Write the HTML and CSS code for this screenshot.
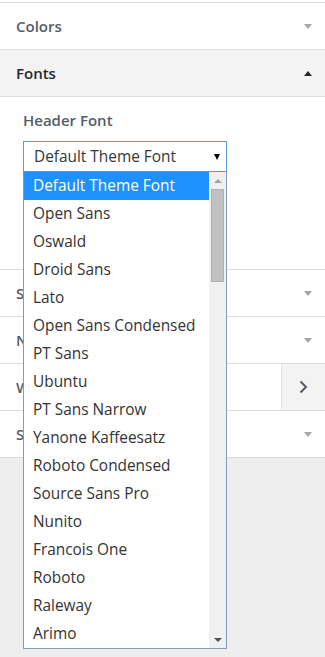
FILE: index.html
```html
<!DOCTYPE html>
<html>
<head>
<meta charset="utf-8">
<link rel="stylesheet" href="styles.css">
</head>
<body>
<div class="pane">
  <div class="top-gap"></div>
  <div class="section">
    <h3 class="title"><span>Colors</span><span class="caret down"></span></h3>
  </div>
  <div class="section open">
    <h3 class="title"><span>Fonts</span><span class="caret up"></span></h3>
    <div class="content">
      <div class="ctl-title">Header Font</div>
      <div class="select-wrap">
        <div class="select"><span>Default Theme Font</span><span class="sel-arrow"></span></div>
        <div class="dropdown">
          <ul class="options">
            <li class="opt active">Default Theme Font</li>
            <li class="opt">Open Sans</li>
            <li class="opt">Oswald</li>
            <li class="opt">Droid Sans</li>
            <li class="opt">Lato</li>
            <li class="opt">Open Sans Condensed</li>
            <li class="opt">PT Sans</li>
            <li class="opt">Ubuntu</li>
            <li class="opt">PT Sans Narrow</li>
            <li class="opt">Yanone Kaffeesatz</li>
            <li class="opt">Roboto Condensed</li>
            <li class="opt">Source Sans Pro</li>
            <li class="opt">Nunito</li>
            <li class="opt">Francois One</li>
            <li class="opt">Roboto</li>
            <li class="opt">Raleway</li>
            <li class="opt">Arimo</li>
          </ul>
          <div class="scrollbar">
            <div class="sb-btn"><span class="sb-up"></span></div>
            <div class="sb-track"><div class="sb-thumb"></div></div>
            <div class="sb-btn"><span class="sb-down"></span></div>
          </div>
        </div>
      </div>
    </div>
  </div>
  <div class="section">
    <h3 class="title"><span>Social Links</span><span class="caret down"></span></h3>
  </div>
  <div class="section">
    <h3 class="title"><span>Navigation</span><span class="caret down"></span></h3>
  </div>
  <div class="section panel">
    <h3 class="title"><span>Widgets</span>
      <span class="chev-box"><svg width="9" height="14" viewBox="0 0 9 14"><polyline points="1.5,1.5 7,7 1.5,12.5" fill="none" stroke="#555d66" stroke-width="2"/></svg></span>
    </h3>
  </div>
  <div class="section last">
    <h3 class="title"><span>Static Front Page</span><span class="caret down"></span></h3>
  </div>
</div>
</body>
</html>
```

FILE: styles.css
```css
html, body {
  margin: 0;
  padding: 0;
  background: #eeeeee;
  font-family: "Open Sans", "Noto Sans", sans-serif;
}

body {
  min-height: 657px;
}

.pane {
  width: 325px;
  min-height: 657px;
}

.top-gap {
  height: 2px;
  background: #fff;
}

.section {
  border-top: 1px solid #dddddd;
  background: #fff;
}

.section.last {
  border-bottom: 1px solid #dddddd;
}

.title {
  margin: 0;
  height: 46px;
  padding: 0 13px 0 16px;
  display: flex;
  align-items: center;
  justify-content: space-between;
  font-size: 15px;
  font-weight: 600;
  color: #555d66;
}

.open .title {
  background: #f3f3f3;
  color: #23282d;
  border-bottom: 1px solid #dddddd;
}

.caret {
  width: 0;
  height: 0;
  border-left: 4px solid transparent;
  border-right: 4px solid transparent;
}

.caret.down {
  border-top: 5px solid #a0a5aa;
}

.caret.up {
  border-bottom: 5px solid #23282d;
}

.panel .title {
  padding-right: 0;
}

.chev-box {
  width: 44px;
  height: 46px;
  background: #f3f3f3;
  border-left: 1px solid #e4e4e4;
  display: flex;
  align-items: center;
  justify-content: center;
  box-sizing: border-box;
}

.content {
  height: 172px;
  box-sizing: border-box;
  padding: 13px 0 0 23px;
  background: #fff;
}

.ctl-title {
  font-size: 15px;
  font-weight: 600;
  line-height: 20px;
  color: #555d66;
  margin-bottom: 11px;
}

.select-wrap {
  position: relative;
  width: 204px;
}

.select {
  height: 31px;
  box-sizing: border-box;
  border: 1px solid #5b9dd9;
  padding: 0 6px 0 10px;
  display: flex;
  align-items: center;
  justify-content: space-between;
  font-size: 15.4px;
  color: #32373c;
  background: #fff;
}

.sel-arrow {
  width: 0;
  height: 0;
  border-left: 3.5px solid transparent;
  border-right: 3.5px solid transparent;
  border-top: 6px solid #000;
}

.dropdown {
  position: absolute;
  top: 31px;
  left: 0;
  width: 204px;
  height: 477px;
  box-sizing: border-box;
  border: 1px solid #7f9db9;
  border-top: none;
  background: #fff;
  display: flex;
  z-index: 10;
}

.options {
  list-style: none;
  margin: 0;
  padding: 0;
  width: 185px;
}

.opt {
  height: 28px;
  line-height: 28px;
  padding-left: 9px;
  font-size: 15.4px;
  color: #333;
  white-space: nowrap;
}

.opt.active {
  background: #1e90ff;
  color: #fff;
}

.scrollbar {
  width: 17px;
  background: #f0f0f0;
  display: flex;
  flex-direction: column;
}

.sb-btn {
  height: 17px;
  display: flex;
  align-items: center;
  justify-content: center;
}

.sb-up {
  width: 0;
  height: 0;
  border-left: 4px solid transparent;
  border-right: 4px solid transparent;
  border-bottom: 4px solid #a3a3a3;
}

.sb-down {
  width: 0;
  height: 0;
  border-left: 4px solid transparent;
  border-right: 4px solid transparent;
  border-top: 4px solid #505050;
}

.sb-track {
  flex: 1;
}

.sb-thumb {
  margin: 0 2px;
  height: 93px;
  box-sizing: border-box;
  background: #c1c1c1;
  border: 1px solid #b0b0b0;
}
```
